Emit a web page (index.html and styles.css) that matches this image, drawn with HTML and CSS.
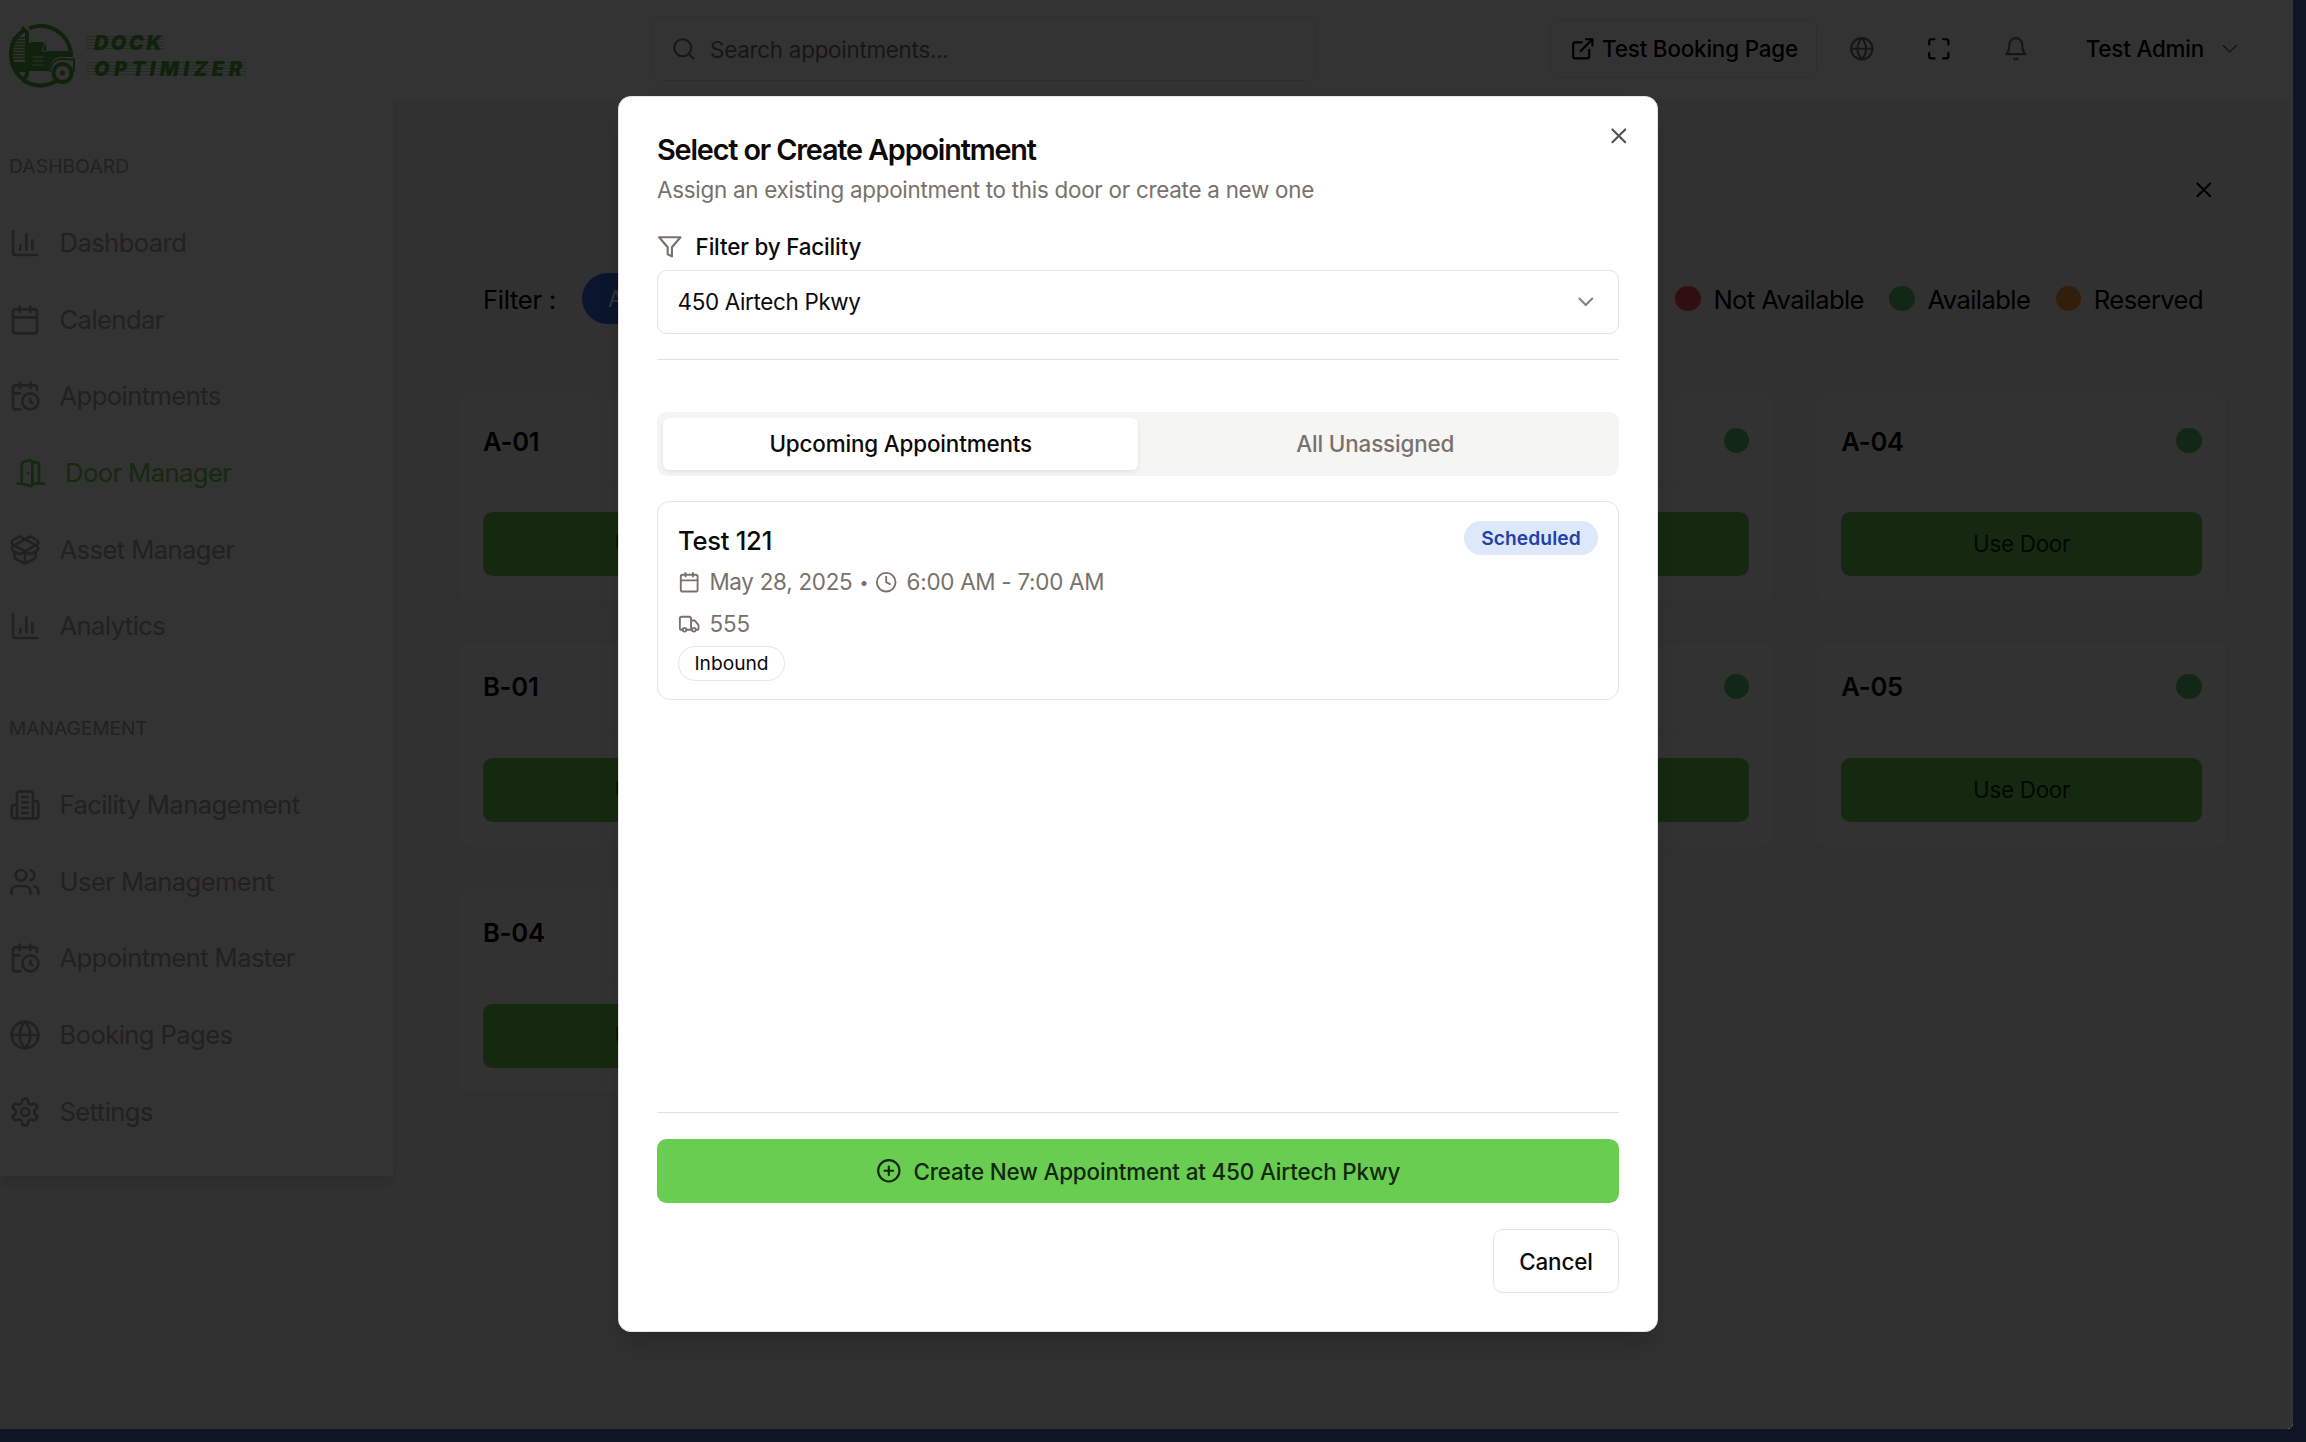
FILE: index.html
```html
<!DOCTYPE html>
<html lang="en">
<head>
<meta charset="utf-8">
<title>Dock Optimizer</title>
<link rel="stylesheet" href="styles.css">
</head>
<body>
<svg class="sprite" aria-hidden="true">
  <symbol id="chart" viewBox="0 0 24 24"><path d="M3 3v16a2 2 0 0 0 2 2h16M13 17V5.500M17.500 17v-7M8.500 17v-3"/></symbol>
  <symbol id="calendar" viewBox="0 0 24 24"><path d="M8 2v4M16 2v4M3 10h18"/><rect width="18" height="18" x="3" y="4" rx="2"/></symbol>
  <symbol id="calclock" viewBox="0 0 24 24"><path d="M21 7.500V6a2 2 0 0 0-2-2H5a2 2 0 0 0-2 2v14a2 2 0 0 0 2 2h3.500M16 2v4M8 2v4M3 10h5M17.500 17.500 16 16.300V14"/><circle cx="16" cy="16" r="6"/></symbol>
  <symbol id="door" viewBox="0 0 24 24"><path d="M13 4h3a2 2 0 0 1 2 2v14M2 20h3M13 20h9M10 12v.01M13 4.562v16.157a1 1 0 0 1-1.242.97L5 20V5.562a2 2 0 0 1 1.515-1.940l4-1A2 2 0 0 1 13 4.561Z"/></symbol>
  <symbol id="box" viewBox="0 0 24 24"><path d="M12 22v-9M15.170 2.210a1.670 1.670 0 0 1 1.630 0L21 4.570a1.930 1.930 0 0 1 0 3.360L8.820 14.790a1.655 1.655 0 0 1-1.640 0L3 12.430a1.930 1.930 0 0 1 0-3.360zM20 13v3.870a2.060 2.060 0 0 1-1.110 1.830l-6 3.080a1.930 1.930 0 0 1-1.780 0l-6-3.080A2.060 2.060 0 0 1 4 16.870V13"/><path d="M21 12.430a1.930 1.930 0 0 0 0-3.360L8.830 2.200a1.640 1.640 0 0 0-1.630 0L3 4.570a1.930 1.930 0 0 0 0 3.360l12.180 6.860a1.636 1.636 0 0 0 1.630 0z"/></symbol>
  <symbol id="building" viewBox="0 0 24 24"><path d="M6 22V4a2 2 0 0 1 2-2h8a2 2 0 0 1 2 2v18ZM6 12H4a2 2 0 0 0-2 2v6a2 2 0 0 0 2 2h2M18 9h2a2 2 0 0 1 2 2v9a2 2 0 0 1-2 2h-2M10 6h4M10 10h4M10 14h4M10 18h4"/></symbol>
  <symbol id="users" viewBox="0 0 24 24"><path d="M16 21v-2a4 4 0 0 0-4-4H6a4 4 0 0 0-4 4v2M22 21v-2a4 4 0 0 0-3-3.870M16 3.130a4 4 0 0 1 0 7.750"/><circle cx="9" cy="7" r="4"/></symbol>
  <symbol id="globe" viewBox="0 0 24 24"><circle cx="12" cy="12" r="10"/><path d="M12 2c-5.300 5.700-5.300 14.300 0 20 5.300-5.700 5.300-14.300 0-20M2 12h20"/></symbol>
  <symbol id="gear" viewBox="0 0 24 24"><path d="M12.220 2h-.44a2 2 0 0 0-2 2v.18a2 2 0 0 1-1 1.730l-.43.25a2 2 0 0 1-2 0l-.15-.08a2 2 0 0 0-2.730.73l-.22.38a2 2 0 0 0 .73 2.730l.15.1a2 2 0 0 1 1 1.720v.51a2 2 0 0 1-1 1.740l-.15.09a2 2 0 0 0-.73 2.730l.22.38a2 2 0 0 0 2.730.73l.15-.08a2 2 0 0 1 2 0l.43.25a2 2 0 0 1 1 1.730V20a2 2 0 0 0 2 2h.44a2 2 0 0 0 2-2v-.18a2 2 0 0 1 1-1.730l.43-.25a2 2 0 0 1 2 0l.15.08a2 2 0 0 0 2.730-.73l.22-.39a2 2 0 0 0-.73-2.730l-.15-.08a2 2 0 0 1-1-1.740v-.5a2 2 0 0 1 1-1.740l.15-.09a2 2 0 0 0 .73-2.730l-.22-.38a2 2 0 0 0-2.730-.73l-.15.08a2 2 0 0 1-2 0l-.43-.25a2 2 0 0 1-1-1.730V4a2 2 0 0 0-2-2z"/><circle cx="12" cy="12" r="3"/></symbol>
  <symbol id="search" viewBox="0 0 24 24"><circle cx="11" cy="11" r="8"/><path d="m21 21-4.300-4.300"/></symbol>
  <symbol id="external" viewBox="0 0 24 24"><path d="M15 3h6v6M10 14 21 3M18 13v6a2 2 0 0 1-2 2H5a2 2 0 0 1-2-2V8a2 2 0 0 1 2-2h6"/></symbol>
  <symbol id="maximize" viewBox="0 0 24 24"><path d="M8 3H5a2 2 0 0 0-2 2v3M21 8V5a2 2 0 0 0-2-2h-3M3 16v3a2 2 0 0 0 2 2h3M16 21h3a2 2 0 0 0 2-2v-3"/></symbol>
  <symbol id="bell" viewBox="0 0 24 24"><path d="M6 8a6 6 0 0 1 12 0c0 7 3 9 3 9H3s3-2 3-9M10.300 21a1.940 1.940 0 0 0 3.400 0"/></symbol>
  <symbol id="chevron" viewBox="0 0 24 24"><path d="m6 9 6 6 6-6"/></symbol>
  <symbol id="close" viewBox="0 0 24 24"><path d="M18 6 6 18M6 6l12 12"/></symbol>
  <symbol id="funnel" viewBox="0 0 24 24"><path d="M22 3H2l8 9.460V19l4 2v-8.540z"/></symbol>
  <symbol id="clock" viewBox="0 0 24 24"><circle cx="12" cy="12" r="10"/><path d="M12 6v6l4 2"/></symbol>
  <symbol id="truck" viewBox="0 0 24 24"><path d="M14 18V6a2 2 0 0 0-2-2H4a2 2 0 0 0-2 2v11a1 1 0 0 0 1 1h2M15 18H9M19 18h2a1 1 0 0 0 1-1v-3.650a1 1 0 0 0-.22-.624l-3.480-4.350A1 1 0 0 0 17.520 8H14"/><circle cx="17" cy="18" r="2"/><circle cx="7" cy="18" r="2"/></symbol>
  <symbol id="plus" viewBox="0 0 24 24"><circle cx="12" cy="12" r="10"/><path d="M8 12h8M12 8v8"/></symbol>
</svg>

<div class="app">
  <aside class="sidebar">
    <div class="brand">
      <svg class="brand-mark" viewBox="0 0 66 64">
        <path class="ring" d="M20 4.500A30 30 0 0 1 61.500 27M47 57A30 30 0 0 1 14 56"/>
        <path class="ring-side" d="M15 6Q1 16 2 32T16 57"/>
        <path class="trailer" d="M4 14h12M3 17h13M2 20h14M2 23h14M2 26h14M2 29h14M2 32h14M3 35h13"/>
        <path d="M14 2l6 6v40c0 5-2 8-6 8h-3v-2c4 0 5-2 5-6V9l-4-5zM3 38h14v10H7zM22 18h14l2 9h26v6H52c-7 0-12 6-12 14H19V20z"/>
        <path class="vents" d="M24 33h10M24 37h10M24 41h10"/>
        <path class="window" d="M36 18l-3 9h5"/>
        <circle class="wheel" cx="53.500" cy="49" r="9"/><circle cx="53.500" cy="49" r="2.500"/>
        <path class="fender" d="M41 47c0-7 5-12 12-12 6 0 10 1 12 0v12"/>
      </svg>
      <div class="brand-name"><span class="dock">DOCK</span><span class="optimizer">OPTIMIZER</span></div>
    </div>
    <nav class="nav">
      <h2>DASHBOARD</h2>
      <a><svg><use href="#chart"/></svg>Dashboard</a>
      <a><svg><use href="#calendar"/></svg>Calendar</a>
      <a><svg><use href="#calclock"/></svg>Appointments</a>
      <a class="active"><svg><use href="#door"/></svg>Door Manager</a>
      <a><svg><use href="#box"/></svg>Asset Manager</a>
      <a><svg><use href="#chart"/></svg>Analytics</a>
      <h2 class="second">MANAGEMENT</h2>
      <a><svg><use href="#building"/></svg>Facility Management</a>
      <a><svg><use href="#users"/></svg>User Management</a>
      <a><svg><use href="#calclock"/></svg>Appointment Master</a>
      <a><svg><use href="#globe"/></svg>Booking Pages</a>
      <a><svg><use href="#gear"/></svg>Settings</a>
    </nav>
  </aside>
  <div class="page">
    <header class="topbar">
      <div class="search"><svg><use href="#search"/></svg><span>Search appointments...</span></div>
      <div class="booking"><svg><use href="#external"/></svg><span>Test Booking Page</span></div>
      <div class="tools">
        <svg class="muted"><use href="#globe"/></svg>
        <svg><use href="#maximize"/></svg>
        <svg class="muted"><use href="#bell"/></svg>
      </div>
      <div class="account"><span>Test Admin</span><svg><use href="#chevron"/></svg></div>
    </header>
    <main class="content">
      <div class="close-row"><svg><use href="#close"/></svg></div>
      <div class="filters">
        <span class="filter-label">Filter :</span><span class="pill">All</span>
        <div class="legend">
          <span><i class="dot red"></i><b>Not Available</b></span>
          <span><i class="dot"></i><b>Available</b></span>
          <span><i class="dot orange"></i><b>Reserved</b></span>
        </div>
      </div>
      <div class="doors">
        <section class="door"><header>A-01<i class="dot"></i></header><div class="door-body"><button>Use Door</button></div></section>
        <section class="door"><header>A-02<i class="dot"></i></header><div class="door-body"><button>Use Door</button></div></section>
        <section class="door"><header>A-03<i class="dot"></i></header><div class="door-body"><button>Use Door</button></div></section>
        <section class="door"><header>A-04<i class="dot"></i></header><div class="door-body"><button>Use Door</button></div></section>
        <section class="door"><header>B-01<i class="dot"></i></header><div class="door-body"><button>Use Door</button></div></section>
        <section class="door"><header>B-02<i class="dot"></i></header><div class="door-body"><button>Use Door</button></div></section>
        <section class="door"><header>B-03<i class="dot"></i></header><div class="door-body"><button>Use Door</button></div></section>
        <section class="door"><header>A-05<i class="dot"></i></header><div class="door-body"><button>Use Door</button></div></section>
        <section class="door"><header>B-04<i class="dot"></i></header><div class="door-body"><button>Use Door</button></div></section>
      </div>
    </main>
  </div>
</div>

<div class="overlay">
  <div class="modal" role="dialog">
    <svg class="modal-close"><use href="#close"/></svg>
    <h1>Select or Create Appointment</h1>
    <p class="desc">Assign an existing appointment to this door or create a new one</p>
    <div class="facility"><svg><use href="#funnel"/></svg><span>Filter by Facility</span></div>
    <div class="select"><span>450 Airtech Pkwy</span><svg><use href="#chevron"/></svg></div>
    <hr>
    <div class="tabs"><div class="tab on">Upcoming Appointments</div><div class="tab">All Unassigned</div></div>
    <article class="appt">
      <div class="appt-info">
        <h3>Test 121</h3>
        <div class="meta"><svg><use href="#calendar"/></svg><span>May 28, 2025</span><span class="sep">•</span><svg><use href="#clock"/></svg><span>6:00 AM - 7:00 AM</span></div>
        <div class="meta"><svg><use href="#truck"/></svg><span class="num">555</span></div>
        <div class="inbound">Inbound</div>
      </div>
      <div class="status">Scheduled</div>
    </article>
    <div class="modal-foot">
      <button class="create"><svg><use href="#plus"/></svg><span>Create New Appointment at 450 Airtech Pkwy</span></button>
      <button class="cancel">Cancel</button>
    </div>
  </div>
</div>
</body>
</html>
```
FILE: styles.css
```css
* { box-sizing: border-box; }

body {
  margin: 0;
  width: 2306px;
  height: 1442px;
  overflow: hidden;
  background: #0f1525;
  font-family: Inter, "Liberation Sans", sans-serif;
  font-size: 22.4px;
  line-height: 32px;
  letter-spacing: -.26px;
  color: #0c0a09;
}

h1, h2, h3, p { margin: 0; font-weight: inherit; font-size: inherit; }
span, b { white-space: nowrap; }
button { font-family: inherit; letter-spacing: inherit; }

svg {
  flex: none;
  fill: none;
  stroke: currentColor;
  stroke-width: 2;
  stroke-linecap: round;
  stroke-linejoin: round;
}

.sprite { position: absolute; width: 0; height: 0; }

/* Application frame */
.app {
  display: flex;
  align-items: flex-start;
  width: 2293px;
  height: 1429px;
  overflow: hidden;
  background: #f5f5f5;
  border-right: 1px solid #fff;
  border-bottom-right-radius: 6px;
  color: #000;
}

.sidebar {
  width: 393px;
  height: 1176px;
  flex: none;
  background: #fff;
  box-shadow: 0 8px 12px rgba(0, 0, 0, .12);
}

.brand {
  display: flex;
  gap: 11px;
  height: 114px;
  padding: 24px 0 0 9px;
  border-bottom: 1px solid #f5f5f4;
  color: #4fa63e;
}

.brand-mark { width: 66px; height: 64px; fill: currentColor; stroke: none; }
.brand-mark .ring,
.brand-mark .ring-side { fill: none; stroke: currentColor; stroke-width: 4; stroke-linecap: butt; }
.brand-mark .trailer { stroke: currentColor; stroke-width: 1.500; }
.brand-mark .vents { stroke: #fff; stroke-width: 1.200; }
.brand-mark .window { fill: none; stroke: #fff; stroke-width: 1; }
.brand-mark .wheel { fill: #fff; stroke: currentColor; stroke-width: 4; }
.brand-mark .fender { fill: none; stroke: currentColor; stroke-width: 2; }

.brand-name {
  display: flex;
  flex-direction: column;
  align-items: flex-start;
  gap: 11px;
  padding-top: 12px;
  font: italic 900 20px/15px Inter, sans-serif;
}
/* Thin stripes behind the wordmark give it the speed-line look */
.brand-name span {
  padding-left: 8px;
  background: repeating-linear-gradient(rgba(79, 166, 62, .4) 0 1px, transparent 1px 3px);
}
.brand-name .dock { letter-spacing: 2.400px; }
.brand-name .optimizer { letter-spacing: 4.400px; margin-right: -4px; }

.nav { display: flex; flex-direction: column; padding-left: 9px; }

.nav h2 {
  height: 38px;
  margin: 33px 0 19.500px;
  font-size: 19.200px;
  line-height: 38px;
  letter-spacing: .15px;
  color: #a8a29e;
}
.nav .second { margin-top: 44.500px; letter-spacing: -.05px; }

.nav a {
  display: flex;
  align-items: center;
  gap: 18.500px;
  height: 76.700px;
  font-size: 25.600px;
  letter-spacing: -.58px;
  color: #a8a29e;
}

.nav svg { width: 32px; height: 32px; }
.nav .active { padding-left: 5.500px; color: #69cd51; }

.page { flex: 1; min-width: 0; }

.topbar {
  display: flex;
  align-items: center;
  height: 101px;
  padding: 0 0 3px 259px;
  background: #fff;
  border-bottom: 1px solid #ececec;
}

.search {
  display: flex;
  flex: none;
  align-items: center;
  gap: 13.500px;
  width: 664px;
  height: 64px;
  padding-left: 18px;
  border: 1px solid #e7e5e4;
  border-radius: 10px;
  color: #78716c;
}
.search svg { width: 25.600px; height: 25.600px; }
.search span { padding-top: 2px; }

.booking {
  display: flex;
  flex: none;
  align-items: center;
  gap: 6.500px;
  width: 267px;
  height: 58px;
  margin-left: 234px;
  padding-left: 19px;
  border: 1px solid #e7e5e4;
  border-radius: 10px;
  font-weight: 500;
  letter-spacing: -.18px;
}
.booking svg { width: 25.600px; height: 25.600px; }

.tools { display: flex; gap: 51.200px; margin-left: 32px; }
.tools svg { width: 25.600px; height: 25.600px; }
.tools .muted { color: #78716c; }

.account { display: flex; align-items: center; margin-left: 57.500px; gap: 13px; font-weight: 500; letter-spacing: -.18px; }
.account svg { width: 25.600px; height: 25.600px; color: #78716c; stroke-width: 1.500; }

.content { padding: 76px 64px 0; }
.close-row { display: flex; justify-content: flex-end; height: 96px; padding-right: 11px; }
.close-row svg { width: 25.600px; height: 25.600px; }

.filters { display: flex; align-items: center; height: 51px; padding: 0 25px 0 26px; font-size: 25.600px; letter-spacing: -.6px; }
.filter-label { width: 73px; padding-top: 2px; letter-spacing: -.3px; }
.pill {
  width: 90px;
  height: 51px;
  margin-left: 26px;
  padding-left: 26px;
  border-radius: 26px;
  background: #3b6ce0;
  color: #fff;
  font-size: 22.400px;
  line-height: 52px;
}
.legend { display: flex; gap: 25.500px; margin-left: auto; }
.legend span { display: flex; align-items: center; gap: 12.500px; }
.legend b { padding-top: 2px; font-weight: 400; }

.dot { display: block; width: 25.600px; height: 25.600px; border-radius: 50%; background: #5cc46c; }
.dot.red { background: #eb4a50; }
.dot.orange { background: #ee9c34; }

.doors {
  display: grid;
  grid-template-columns: repeat(4, 1fr);
  gap: 38.800px 40px;
  margin-top: 71px;
}
.door {
  height: 207.200px;
  border: 1px solid #ebebeb;
  border-radius: 10px;
  background: #f7f7f7;
  box-shadow: 0 2px 3px rgba(0, 0, 0, .04);
}
.door header {
  display: flex;
  align-items: center;
  justify-content: space-between;
  height: 90px;
  padding: 2px 25px 0;
  border-bottom: 1px solid #ebebeb;
  font-size: 25.600px;
  font-weight: 600;
}
.door .dot { margin-top: -2px; }
.door-body { padding: 25.600px 25px; }
.door button {
  display: block;
  width: 100%;
  height: 64px;
  border: 0;
  border-radius: 9.600px;
  background: #69cd51;
  color: #14280f;
  font-size: 22.400px;
}

/* Dialog */
.overlay {
  position: absolute;
  left: 0;
  top: 0;
  width: 2293px;
  height: 1429px;
  padding: 96px 0 0 618px;
  background: rgba(0, 0, 0, .8);
  border-bottom-right-radius: 6px;
}

.modal {
  position: relative;
  display: flex;
  flex-direction: column;
  width: 1040px;
  height: 1236px;
  padding: 37px 38px 38px;
  border: 1px solid #e7e5e4;
  border-radius: 12.800px;
  background: #fff;
  box-shadow: 0 16px 24px -5px rgba(0, 0, 0, .18);
}

.modal-close { position: absolute; right: 25px; top: 26px; width: 25.600px; height: 25.600px; color: #54524f; }

.modal h1 { height: 32px; font-size: 28.800px; font-weight: 600; letter-spacing: -1.160px; }
.desc { margin-top: 8px; height: 32px; color: #78716c; }

.facility { display: flex; align-items: center; gap: 13px; height: 26px; margin-top: 28px; font-weight: 500; letter-spacing: -.16px; }
.facility svg { width: 25.600px; height: 25.600px; color: #78716c; }

.select {
  display: flex;
  align-items: center;
  justify-content: space-between;
  height: 64px;
  margin-top: 10px;
  padding: 0 19px 0 19.500px;
  border: 1px solid #e7e5e4;
  border-radius: 9.600px;
  letter-spacing: -.32px;
}
.select svg { width: 25.600px; height: 25.600px; color: #868482; }

hr { width: 100%; height: 1px; margin: 25px 0 0; border: 0; background: #e3e1e0; }

.tabs {
  display: flex;
  height: 64px;
  margin-top: 52px;
  padding: 6.400px;
  border-radius: 9.600px;
  background: #f5f5f4;
  font-weight: 500;
  letter-spacing: -.14px;
  color: #78716c;
}
.tab { flex: 1; text-align: center; line-height: 52px; border-radius: 6.400px; }
.tab.on { background: #fff; color: #0c0a09; box-shadow: 0 2px 4px rgba(0, 0, 0, .08); }

.appt {
  display: flex;
  justify-content: space-between;
  height: 199px;
  margin-top: 25px;
  padding: 19px 20px;
  border: 1px solid #e7e5e4;
  border-radius: 12.800px;
}
.appt h3 { height: 39px; font-size: 25.600px; font-weight: 500; line-height: 39px; }
.meta { display: flex; align-items: center; height: 32px; margin-top: 6px; color: #78716c; }
.meta + .meta { margin-top: 10px; }
.meta svg { width: 22.400px; height: 22.400px; margin-right: 9px; }
.num { letter-spacing: 0; }
.sep { margin: 0 7px; font-size: 16px; }

.inbound {
  width: 107px;
  height: 35px;
  margin-top: 6px;
  border: 1px solid #e7e5e4;
  border-radius: 18px;
  font-size: 19.200px;
  line-height: 32px;
  letter-spacing: 0;
  text-align: center;
}
.status {
  width: 134px;
  height: 34px;
  border-radius: 17px;
  background: #dee8fb;
  color: #2440ac;
  font-size: 19.200px;
  font-weight: 600;
  line-height: 34px;
  letter-spacing: .1px;
  text-align: center;
}

.modal-foot {
  display: flex;
  flex-direction: column;
  align-items: flex-end;
  gap: 26px;
  margin-top: auto;
  padding-top: 26px;
  border-top: 1px solid #e3e1e0;
}
.modal-foot button {
  display: flex;
  align-items: center;
  justify-content: center;
  height: 64px;
  border: 0;
  border-radius: 9.600px;
  font-size: 22.400px;
  font-weight: 500;
  letter-spacing: -.14px;
}
.modal-foot .create { gap: 12px; width: 100%; background: #69cd51; color: #14280f; }
.create svg { width: 25.600px; height: 25.600px; }
.modal-foot .cancel { width: 126px; border: 1px solid #e7e5e4; background: #fff; color: #0c0a09; }
```
